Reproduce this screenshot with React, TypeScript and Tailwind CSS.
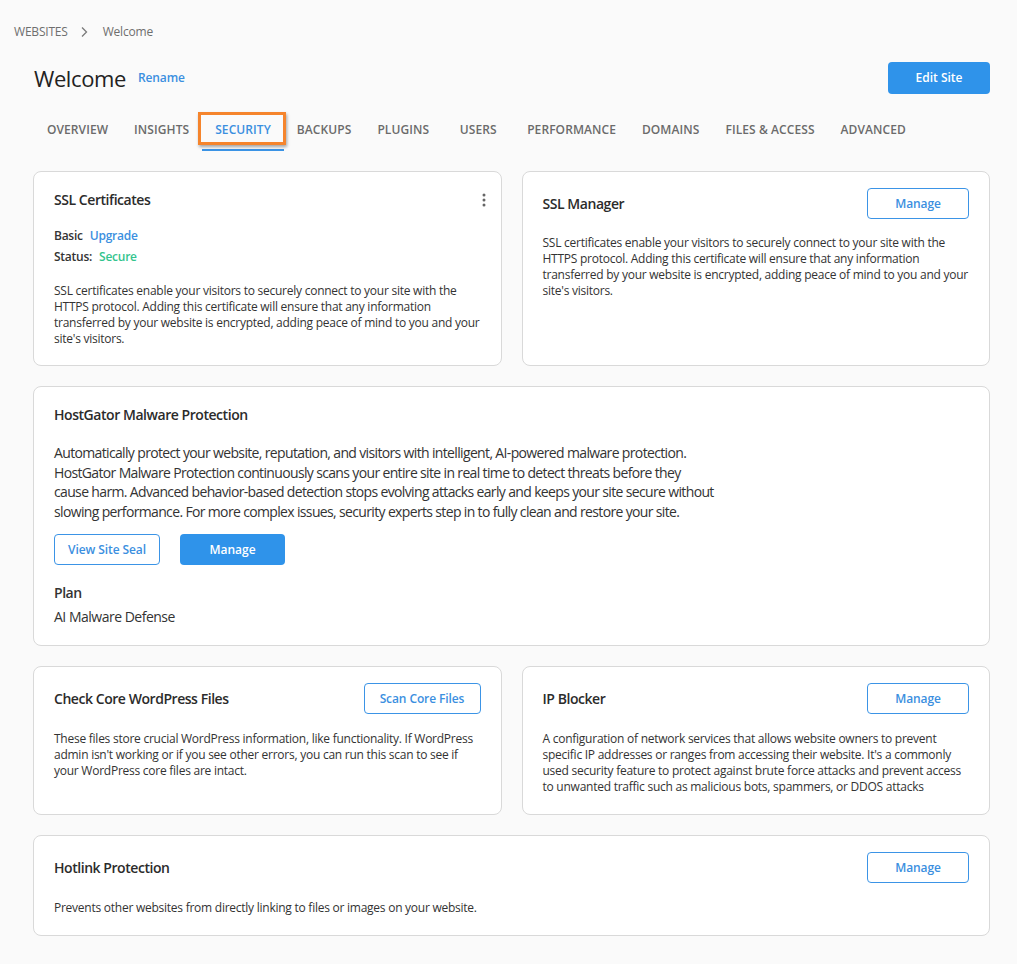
import React from "react";

const font = { fontFamily: '"Open Sans", "Noto Sans", sans-serif' };

function OutlineBtn({ children, className = "" }: { children: React.ReactNode; className?: string }) {
  return (
    <button
      className={
        "h-[31px] rounded-[4px] border border-[#3b94e6] bg-white text-[12px] font-semibold tracking-[-0.1px] text-[#3b8fe0] " +
        className
      }
    >
      {children}
    </button>
  );
}

function Card({ children, className = "" }: { children: React.ReactNode; className?: string }) {
  return (
    <div className={"rounded-[8px] border border-[#d9d9d9] bg-white px-5 pt-4 pb-[18px] " + className}>
      {children}
    </div>
  );
}

function Title({ children }: { children: React.ReactNode }) {
  return <h2 className="text-[14px] font-semibold leading-6 tracking-[-0.45px] text-[#2b2b2b]">{children}</h2>;
}

function Lines({ lines, className = "" }: { lines: string[]; className?: string }) {
  return (
    <p className={"whitespace-nowrap " + className}>
      {lines.map((l, i) => (
        <React.Fragment key={i}>
          {l}
          {i < lines.length - 1 && <br />}
        </React.Fragment>
      ))}
    </p>
  );
}

const sslLines = [
  "SSL certificates enable your visitors to securely connect to your site with the",
  "HTTPS protocol. Adding this certificate will ensure that any information",
  "transferred by your website is encrypted, adding peace of mind to you and your",
  "site's visitors.",
];

const small = "text-[12px] leading-4 tracking-[-0.25px] text-[#333]";

const tabs = [
  "OVERVIEW",
  "INSIGHTS",
  "SECURITY",
  "BACKUPS",
  "PLUGINS",
  "USERS",
  "PERFORMANCE",
  "DOMAINS",
  "FILES & ACCESS",
  "ADVANCED",
];

export default function App() {
  return (
    <div style={font} className="min-h-[964px] w-full bg-[#fafafa] text-[#333]">
      <div className="pl-[14px] pt-[23px] flex items-center text-[12px] leading-[18px] tracking-[-0.2px] text-[#6e6e6e]">
        <span>WEBSITES</span>
        <svg className="ml-[12px] mr-[15px]" width="8" height="12" viewBox="0 0 8 12" fill="none">
          <path d="M2 1.5L6.5 6L2 10.5" stroke="#7a7a7a" strokeWidth="1.3" />
        </svg>
        <span>Welcome</span>
      </div>

      <div className="pl-[33px] pr-[27px]">
        <div className="mt-[21px] flex h-8 items-center justify-between">
          <div className="flex items-center">
            <h1 className="pl-px text-[22px] leading-8 tracking-[-0.4px] text-[#222]">Welcome</h1>
            <span className="ml-[12px] text-[12px] font-semibold tracking-[-0.1px] text-[#3b8fe0]">Rename</span>
          </div>
          <button className="h-8 w-[102px] rounded-[4px] bg-[#2f93ea] text-[12px] font-semibold text-white">
            Edit Site
          </button>
        </div>

        <div className="mt-5 flex pl-px">
          {tabs.map((t) => {
            const active = t === "SECURITY";
            return (
              <div
                key={t}
                className={
                  "relative min-w-[72px] px-[13px] pt-[8px] pb-[11px] text-center text-[12px] font-semibold leading-4 tracking-[0.08px] whitespace-nowrap border-b-2 " +
                  (active ? "border-[#3b94e6] text-[#3b8fe0]" : "border-transparent text-[#6b6b6b]")
                }
              >
                {t}
                {active && (
                  <div className="absolute left-[-4px] top-[-2px] h-[33px] w-[88px] border-[3px] border-[#f5842c] shadow-[1px_2px_3px_rgba(0,0,0,0.35)]" />
                )}
              </div>
            );
          })}
        </div>

        <div className="mt-5 grid grid-cols-2 gap-5">
          <Card>
            <div className="flex items-center justify-between">
              <Title>SSL Certificates</Title>
              <svg width="4" height="14" viewBox="0 0 4 14" className="mr-[-5px]">
                <circle cx="2" cy="2" r="1.5" fill="#666" />
                <circle cx="2" cy="7" r="1.5" fill="#666" />
                <circle cx="2" cy="12" r="1.5" fill="#666" />
              </svg>
            </div>
            <div className="mt-[14px] text-[12px] leading-5 tracking-[-0.25px]">
              <div>
                <span className="font-semibold">Basic</span>
                <span className="ml-[7px] font-semibold text-[#3b8fe0]">Upgrade</span>
              </div>
              <div className="mt-px">
                <span className="font-semibold">Status:</span>
                <span className="ml-[7px] font-semibold text-[#33c48e]">Secure</span>
              </div>
            </div>
            <Lines className={"mt-4 " + small} lines={sslLines} />
          </Card>

          <Card>
            <div className="flex items-center justify-between">
              <Title>SSL Manager</Title>
              <OutlineBtn className="w-[102px]">Manage</OutlineBtn>
            </div>
            <Lines className={"mt-4 " + small} lines={sslLines} />
          </Card>
        </div>

        <Card className="mt-5">
          <Title>HostGator Malware Protection</Title>
          <Lines
            className="mt-4 text-[14px] leading-[19.5px] tracking-[-0.65px] text-[#333]"
            lines={[
              "Automatically protect your website, reputation, and visitors with intelligent, AI-powered malware protection.",
              "HostGator Malware Protection continuously scans your entire site in real time to detect threats before they",
              "cause harm. Advanced behavior-based detection stops evolving attacks early and keeps your site secure without",
              "slowing performance. For more complex issues, security experts step in to fully clean and restore your site.",
            ]}
          />
          <div className="mt-[13px] flex gap-5">
            <OutlineBtn className="w-[106px]">View Site Seal</OutlineBtn>
            <button className="h-[31px] w-[105px] rounded-[4px] bg-[#2f93ea] text-[12px] font-semibold text-white">
              Manage
            </button>
          </div>
          <div className="mt-[18px] text-[14px] font-semibold leading-5 tracking-[-0.45px]">Plan</div>
          <div className="mt-1 text-[14px] leading-5 tracking-[-0.5px]">AI Malware Defense</div>
        </Card>

        <div className="mt-5 grid grid-cols-2 gap-5">
          <Card className="pb-[19px]">
            <div className="flex items-center justify-between">
              <Title>Check Core WordPress Files</Title>
              <OutlineBtn className="w-[117px]">Scan Core Files</OutlineBtn>
            </div>
            <Lines
              className={"mt-[17px] " + small}
              lines={[
                "These files store crucial WordPress information, like functionality. If WordPress",
                "admin isn't working or if you see other errors, you can run this scan to see if",
                "your WordPress core files are intact.",
              ]}
            />
          </Card>
          <Card className="pb-[19px]">
            <div className="flex items-center justify-between">
              <Title>IP Blocker</Title>
              <OutlineBtn className="w-[102px]">Manage</OutlineBtn>
            </div>
            <Lines
              className={"mt-[17px] " + small}
              lines={[
                "A configuration of network services that allows website owners to prevent",
                "specific IP addresses or ranges from accessing their website. It's a commonly",
                "used security feature to protect against brute force attacks and prevent access",
                "to unwanted traffic such as malicious bots, spammers, or DDOS attacks",
              ]}
            />
          </Card>
        </div>

        <Card className="mt-5 pb-[19px]">
          <div className="flex items-center justify-between">
            <Title>Hotlink Protection</Title>
            <OutlineBtn className="w-[102px]">Manage</OutlineBtn>
          </div>
          <Lines
            className={"mt-[17px] " + small}
            lines={["Prevents other websites from directly linking to files or images on your website."]}
          />
        </Card>
      </div>
    </div>
  );
}
